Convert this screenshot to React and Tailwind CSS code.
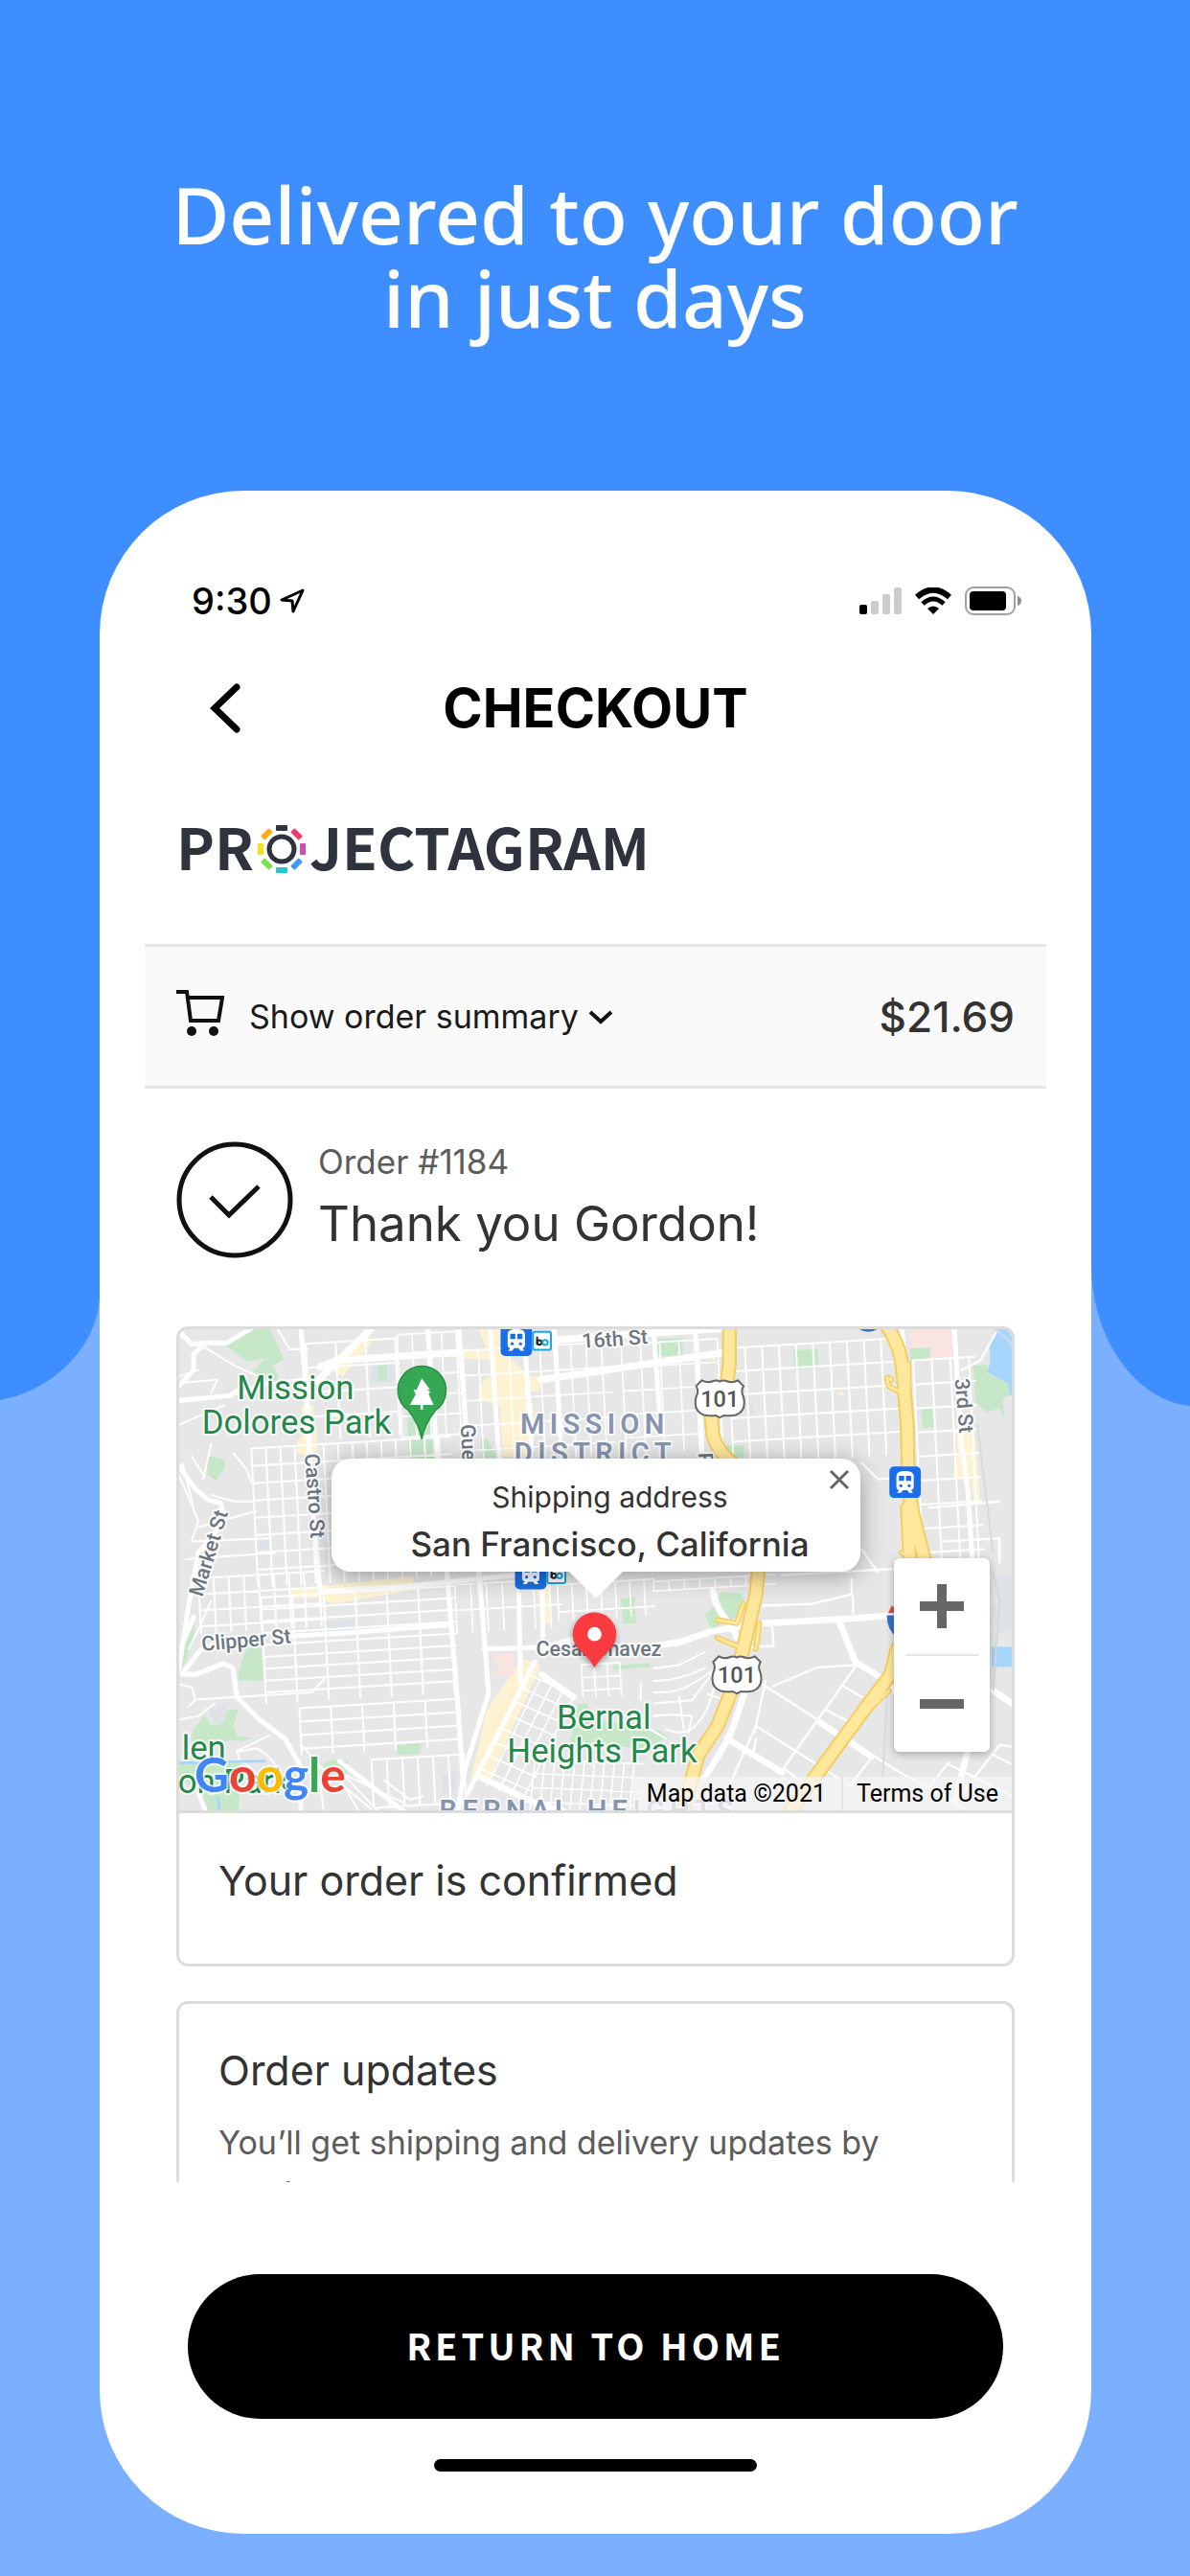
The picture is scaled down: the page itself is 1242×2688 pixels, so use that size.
import React from "react";

const range = (end, step) => {
  const out = [];
  for (let v = 0; v <= end; v += step) out.push(v);
  return out;
};

// A block of city streets: two families of parallel lines leaning by ax and ay.
function Streets({ x, y, w, h, dx, dy, ax = 0.05, ay = -0.06, sw = 6 }) {
  const at = (u, v) => `${x + u + ax * v} ${y + v + ay * u}`;
  const d =
    range(w, dx).map((u) => `M${at(u, 0)}L${at(u, h)}`).join("") +
    range(h, dy).map((v) => `M${at(0, v)}L${at(w, v)}`).join("");
  return <path d={d} strokeWidth={sw} />;
}

function TrainSign({ x, y }) {
  return (
    <g transform={`translate(${x} ${y})`}>
      <rect width="98" height="98" rx="14" fill="#1a6fe8" />
      <path d="M22 30q0-16 27-16t27 16v34q0 8-8 10l6 8h-12l-6-8h-14l-6 8h-12l6-8q-8-2-8-10z" fill="#fff" />
      <path d="M30 29h16v16h-16zM52 29h16v16h-16z" fill="#1a6fe8" />
      <circle cx="36" cy="60" r="5" fill="#1a6fe8" />
      <circle cx="62" cy="60" r="5" fill="#1a6fe8" />
    </g>
  );
}

function BartSign({ x, y }) {
  return (
    <g transform={`translate(${x} ${y})`}>
      <rect x="2" y="2" width="56" height="56" rx="6" fill="#fff" stroke="#1ba5e0" strokeWidth="6" />
      <path d="M15 17v25" stroke="#222" strokeWidth="6" />
      <circle cx="22" cy="35" r="7" fill="none" stroke="#222" strokeWidth="6" />
      <circle cx="40" cy="35" r="8" fill="none" stroke="#1ba5e0" strokeWidth="6" />
    </g>
  );
}

function Shield101({ x, y }) {
  return (
    <g transform={`translate(${x} ${y})`}>
      <path
        d="M22 4Q40 14 58 6Q68 2 78 8Q88 2 98 6Q116 14 134 4L152 22Q142 38 152 56Q162 100 128 112Q104 116 90 114L78 120L66 114Q52 116 28 112Q-6 100 4 56Q14 38 4 22Z"
        fill="#fff" stroke="#666" strokeWidth="6" strokeLinejoin="round"
      />
      <text x="78" y="88" textAnchor="middle" fontSize="70" fontWeight="500" fill="#555">101</text>
    </g>
  );
}

function CityMap() {
  return (
    <svg
      viewBox="0 0 2598 1506"
      preserveAspectRatio="xMidYMid slice"
      className="block h-[502px] w-full font-['Roboto',sans-serif]"
      role="img"
      aria-label="Map of San Francisco"
    >
      <rect width="2598" height="1506" fill="#e7e7e7" />

      <g fill="#c6e8c9">
        <path d="M140 50L220 -5H280L320 80L326 96L290 118L308 140L306 165L226 140L268 92L212 104Z" />
        <path d="M88 398L142 408L140 440L116 474L88 456Z" />
        <path d="M712 262H788L794 420L716 415Z" />
        <path d="M940 340L965 350L990 402L944 404Z" />
        <path d="M1488 32L1572 30L1572 84L1492 88ZM1916 68L1992 64L1996 124L1920 130ZM1708 366H1762V404H1724ZM2280 62L2346 58L2342 92L2282 98ZM2316 252L2350 250L2356 308L2320 312Z" />
        <path d="M2478 116L2520 114L2520 140L2590 172V212L2570 216L2575 280L2560 250L2520 262L2484 228Z" />
        <path d="M208 1000L256 994L264 1100L186 1098L184 1078ZM10 960L40 940L42 905L48 945L20 1040L8 1060Z" />
        <path d="M40 1260L80 1205L100 1240L150 1190L184 1188L170 1240L180 1270L224 1278L200 1290L160 1284L110 1300L40 1290Z" />
        <path d="M0 1355H190L185 1506H90L70 1450L0 1400ZM450 1360L480 1346L530 1350L520 1400H460Z" />
        <path d="M680 1300L755 1295L750 1328L682 1332ZM1379 842L1422 840L1426 920L1384 922ZM1354 1052L1470 1044V1056L1356 1066Z" />
        <path d="M1690 822L1758 826L1760 870L1730 905L1660 938L1640 894L1676 860ZM1245 1172L1270 1170L1300 1220L1500 1255L1530 1278L1440 1310L1220 1290Z" />
      </g>
      <g fill="#fdf3d3">
        <path d="M470 130L590 15L600 45L510 150ZM380 240H420V300L430 320V380L400 395L365 390L370 350L390 330Z" />
        <path d="M935 0H1005L1000 60L1090 150L1125 150V195L1085 200L1105 240L1105 400H1010L1000 240L935 220L940 170L985 140L975 100L850 90L860 60L960 70Z" />
        <path d="M350 812L730 774V816L480 860L430 840L350 844ZM1110 800H1155V885L1165 920H1130L1125 850ZM1070 1030L1130 1050L970 1400L910 1400L935 1300L960 1190Z" />
        <path d="M2420 320L2482 318L2500 546L2480 548L2470 470L2414 470L2430 380ZM1664 90H1672V100H1662ZM2054 200L2074 198V208H2056Z" />
      </g>
      <g fill="#dfe3e8">
        <path d="M600 115L672 100V165L596 175ZM240 662L282 656V712L244 716ZM455 918L545 908V940L458 944ZM92 1190L150 1168L140 1230L110 1240ZM820 1390L865 1380V1450L820 1448ZM1765 232L1792 230V280H1766Z" />
        <path d="M2565 770Q2530 800 2555 850L2530 870L2560 950L2598 940V770Z" />
      </g>
      <path d="M618 118L648 112V165H620Z" fill="#c6e8c9" />
      <path d="M2278 0H2410L2414 94L2344 96V60L2280 62ZM974 1020L1044 1012L1046 1085L992 1088L1002 1046L978 1044ZM1680 802L1710 798L1712 816L1686 824Z" fill="#fae4e2" />
      <path d="M2552 0H2598V210L2592 208L2586 172L2520 136L2530 110L2528 40ZM2535 994H2598V1056H2535Z" fill="#a6d6fb" />

      <g stroke="#fff" fill="none" strokeLinecap="round" strokeLinejoin="round">
        <Streets x={225} y={375} w={620} h={430} dx={45} dy={54} />
        <Streets x={395} y={48} w={280} h={300} dx={93} dy={76} />
        <Streets x={680} y={20} w={200} h={330} dx={46} dy={64} sw={5} />
        <Streets x={885} y={70} w={460} h={350} dx={48} dy={78} sw={5} />
        <Streets x={1379} y={50} w={300} h={340} dx={60} dy={73} sw={5} />
        <Streets x={1712} y={62} w={520} h={360} dx={53} dy={73} />
        <Streets x={2290} y={100} w={190} h={640} dx={58} dy={75} />
        <Streets x={60} y={780} w={390} h={170} dx={47} dy={50} />
        <Streets x={255} y={840} w={600} h={330} dx={98} dy={37} />
        <Streets x={375} y={1185} w={500} h={145} dx={98} dy={42} />
        <Streets x={600} y={1346} w={290} h={150} dx={48} dy={150} />
        <Streets x={860} y={800} w={330} h={150} dx={49} dy={80} sw={5} />
        <Streets x={1180} y={800} w={300} h={110} dx={45} dy={85} sw={5} />
        <Streets x={1480} y={790} w={380} h={30} dx={48} dy={30} sw={5} />
        <Streets x={1090} y={1080} w={150} h={330} dx={36} dy={42} ax={-0.5} ay={0.45} sw={5} />
        <Streets x={1110} y={1345} w={340} h={160} dx={31} dy={44} ay={0.04} ax={-0.1} sw={5} />
        <Streets x={1255} y={1050} w={120} h={100} dx={40} dy={40} sw={5} />
        <path
          strokeWidth="6"
          d="M0 230L180 205L260 175L400 155M0 300L140 240M80 60L180 120L250 150M0 150L60 130M300 -10L345 65H400M0 170L120 160L100 200M170 390L210 440L225 480M100 360L75 470M40 400L80 465M0 460L60 600L40 660M100 520L170 540L230 540M60 620L240 570M40 665L280 655M20 720L300 700M10 420L45 560M100 850L60 940L30 1000M0 1110L40 1120L50 1160L30 1180M50 1158L180 1150L410 1136M460 1085L415 1136M0 1220L60 1210L110 1170M180 1318L220 1300L280 1270M185 1320L240 1310Q290 1330 320 1400M180 1320L190 1350Q240 1370 260 1430M380 1300L410 1330M430 1360L600 1500M470 1370L700 1480M500 1400L560 1506M520 1400L620 1506M440 1420L450 1500M640 1410L720 1470L760 1460"
        />
        <path
          strokeWidth="6"
          d="M1480 1060Q1500 1060 1560 1050L1640 1010M1480 1100Q1560 1100 1640 1060M1480 1135Q1550 1140 1600 1110L1680 1060M1480 1170L1600 1160L1630 1120L1690 1040M1480 1210Q1540 1200 1600 1210L1590 1260M1520 1250Q1600 1290 1650 1180L1670 1120M1700 1160L1650 1140M1560 1150L1575 1250M1440 1110V1160M1450 1240L1520 1280"
        />
        <path
          strokeWidth="7"
          d="M1820 865L1970 860L2098 830V780M2102 835L2103 890M1850 930L1855 990L1780 995M1855 1115L1990 1058L2110 1050M1820 1110L2240 1380M1800 1240L2100 1430M1800 1240L1750 1350L1720 1420M1800 1280L1790 1330M2110 1055L1880 1380M2070 1115L2130 1150M2020 1190L2045 1205L2120 1240M1890 1375L1990 1450M1830 1100L1795 1260M2160 1340L2090 1430M2240 1380L2400 1470M2400 1360L2600 1460M2400 1355L2340 1430L2450 1500M2560 1300L2420 1480M2540 1330L2598 1360M2598 1305L2560 1300"
        />
        <path strokeWidth="7" d="M2130 420L2180 470L2300 462M2340 560L2560 540M2380 665L2560 655V730M2440 130L2500 100L2550 10M2130 690L2180 760M1880 770L2230 750" />
        <path
          strokeWidth="15"
          d="M0 10L40 50L85 45L150 45L225 0M85 45L45 80V130L0 180M0 225L160 210L180 195M0 430L50 500L90 535L130 545L140 590L110 640L60 700L30 860L0 1060M10 1075L70 1000L100 990M10 1078L50 1080L140 1045L168 1060L180 1150L250 1220L330 1280L375 1360L380 1500M0 1010L45 900M60 1450L80 1500M500 1350L700 1506"
        />
        <path strokeWidth="15" d="M380 0L392 150L400 300L420 600L440 820L700 805L1040 770M775 -10L800 330L830 700L870 1180L885 1400M872 -10L900 380L930 700L955 1000L965 1140L890 1380L870 1506M970 -10L995 360L1010 480M1075 -10L1100 380M1170 -10L1190 340M350 960L520 950L840 925M950 1000L1130 995M1110 1040L900 1450M1060 830L1065 1100L1075 1120M1132 780L1135 960" />
        <path strokeWidth="22" d="M610 -10L430 165M440 120L490 100L870 75M1130 40L1320 25L1700 0M1130 160L1299 135L1700 75" />
        <path strokeWidth="15" d="M1480 0L1500 280M1610 -10L1630 390M2418 -10L2440 350L2460 500L2475 720M2255 0L2275 230M2290 740L2330 740" />
        <path strokeWidth="20" d="M1665 820Q1675 880 1725 930L1740 965M1480 990L1560 980L1660 945L1820 920L2100 905L2230 895M2060 915L2110 1040L2190 1090L2260 1160M1770 1120L1730 1240L1710 1285L1660 1370L1640 1400M1710 1280L1880 1385M2000 1230L2160 1335M2540 1130L2598 1170M2460 1320L2420 1480M940 1400L1110 1480L1200 1506M1130 1080L1230 1150M1130 1000L1270 960L1340 975" />
      </g>

      <path d="M270 1350L0 1356M120 1460L126 1506" stroke="#a6d6fb" strokeWidth="8" fill="none" />
      <path d="M2540 0Q2600 40 2598 60M2490 300L2540 700M2210 1120L2190 1500M2540 760L2560 850L2540 1130" stroke="#d6dae0" strokeWidth="6" fill="none" />

      <g fill="none" strokeLinecap="round" strokeLinejoin="round">
        <g stroke="#f3cd62" strokeWidth="46">
          <path d="M1717 -20V110L1705 200L1660 270L1665 330Q1680 390 1740 430Q1800 500 1810 720L1800 830L1760 1000L1720 1140L1680 1240L1620 1330L1590 1440L1570 1520" />
          <path d="M2200 -20Q2250 50 2256 120L2272 300L2275 500L2290 580L2330 740M2272 560L2280 720M2240 1000L2220 1080L2130 1200L2020 1350L1940 1460L1890 1530" />
        </g>
        <path d="M2222 160Q2200 140 2215 180L2250 200M2276 110V250M2255 700L2290 720M1680 910L1740 920L1760 860M1680 965L1760 1000M1810 920L1800 1000M2215 1130L2110 1230" stroke="#f3cd62" strokeWidth="18" />
        <path d="M2222 160Q2200 140 2215 180L2250 200M2276 110V250M2255 700L2290 720M1680 910L1740 920L1760 860M1680 965L1760 1000M1810 920L1800 1000M2215 1130L2110 1230" stroke="#ffe79c" strokeWidth="9" />
        <g stroke="#ffe79c" strokeWidth="34">
          <path d="M1717 -20V110L1705 200L1660 270L1665 330Q1680 390 1740 430Q1800 500 1810 720L1800 830L1760 1000L1720 1140L1680 1240L1620 1330L1590 1440L1570 1520" />
          <path d="M2200 -20Q2250 50 2256 120L2272 300L2275 500L2290 580L2330 740M2272 560L2280 720M2240 1000L2220 1080L2130 1200L2020 1350L1940 1460L1890 1530" />
        </g>
      </g>

      <TrainSign x={1003} y={-12} />
      <BartSign x={1102} y={9} />
      <TrainSign x={1048} y={716} />
      <BartSign x={1147} y={737} />
      <TrainSign x={2216} y={431} />
      <path d="M2108 -8H2192Q2150 30 2108 -8Z" fill="#3474c9" />
      <path d="M2208 895H2240V965Q2208 940 2208 895Z" fill="#3474c9" />
      <path d="M2212 888L2224 864L2240 880V888Z" fill="#cf5155" />

      <g stroke="#fff" strokeWidth="12" strokeLinejoin="round" style={{ paintOrder: "stroke" }} strokeOpacity="0.8">
        <g fill="#23884a" fontSize="104">
          <text x="363" y="222" textAnchor="middle">Mission</text>
          <text x="366" y="327" textAnchor="middle">Dolores Park</text>
          <text x="1325" y="1248" textAnchor="middle">Bernal</text>
          <text x="1320" y="1353" textAnchor="middle">Heights Park</text>
          <text x="8" y="1344">len</text>
          <text x="-4" y="1450">on Park</text>
        </g>
        <g fill="#8694b0" fontSize="87" fontWeight="600">
          <text x="1064" y="329" letterSpacing="16">MISSION</text>
          <text x="1046" y="419" letterSpacing="16">DISTRICT</text>
          <text x="812" y="1532" letterSpacing="16">BERNAL HEIGHTS</text>
        </g>
        <g fill="#6c7680" fontSize="64" fontWeight="500">
          <text x="1258" y="62" transform="rotate(-4 1258 62)">16th St</text>
          <text transform="translate(878 300) rotate(87)">Gue</text>
          <text transform="translate(392 392) rotate(86)">Castro St</text>
          <text transform="translate(72 840) rotate(-73)">Market St</text>
          <text transform="translate(72 1006) rotate(-5)">Clipper St</text>
          <text transform="translate(2420 158) rotate(85)">3rd St</text>
          <text transform="translate(1620 388) rotate(88)">Po</text>
          <text x="1114" y="1022">Cesar Chavez</text>
        </g>
      </g>

      <Shield101 x={1609} y={158} />
      <Shield101 x={1662} y={1019} />

      <path d="M757 345Q750 300 715 255A75 75 0 1 1 800 255Q764 300 757 345Z" fill="#34a853" stroke="#2b9247" strokeWidth="5" />
      <path d="M757 156L783 192H773L783 198L779 206L794 239H761V253H753V239H720L738 206L731 192H741Z" fill="#fff" />

      <path d="M1296 1062Q1280 1036 1256 1018A68 68 0 1 1 1338 1016Q1310 1040 1296 1062Z" fill="#000" opacity="0.4" className="blur-[10px]" />
      <path d="M1296 1059Q1284 1034 1250 1004A68 68 0 1 1 1344 1002Q1310 1034 1296 1059Z" fill="#fa3c41" />
      <circle cx="1296" cy="954" r="22" fill="#fff" />

      <text
        x="48" y="1448" fontSize="148" fontWeight="700"
        className="font-['Lato',sans-serif]"
        stroke="#fff" strokeWidth="12" strokeOpacity="0.7" strokeLinejoin="round" style={{ paintOrder: "stroke" }}
      >
        <tspan fill="#4285f4">G</tspan>
        <tspan fill="#ea4335">o</tspan>
        <tspan fill="#fbbc05">o</tspan>
        <tspan fill="#4285f4">g</tspan>
        <tspan fill="#34a853">l</tspan>
        <tspan fill="#ea4335">e</tspan>
      </text>
    </svg>
  );
}

const logoTicks = ["#2e333d", "#ef3b6c", "#c94fb8", "#4596f0", "#26c6c6", "#7de04f", "#f7e01e", "#ffab1a"];

function Logo() {
  return (
    <div
      className="flex items-center text-[60px] font-bold leading-[52px] text-[#2e333d] font-['Noto_Sans_CJK_JP',sans-serif]"
      aria-label="Projectagram"
    >
      <span className="pb-2">PR</span>
      <svg viewBox="-27 -27 54 54" className="mx-0.5 size-[54px]" aria-hidden="true">
        <circle r="13" fill="none" stroke="#2e333d" strokeWidth="5" />
        {logoTicks.map((color, i) => (
          <rect key={color} x="-6" y="-25" width="12" height="6" rx="1" fill={color} transform={`rotate(${i * 45})`} />
        ))}
      </svg>
      <span className="pb-2">JECTAGRAM</span>
    </div>
  );
}

function StatusBar() {
  return (
    <div className="flex h-12 items-center justify-between pl-24 pr-[72px]">
      <div className="flex items-center gap-2">
        <span className="text-[38px] font-medium leading-none text-black">9:30</span>
        <svg viewBox="0 0 26 26" className="size-[26px]" aria-hidden="true">
          <path d="M2 12L24 2L14 24L13 13Z" fill="none" stroke="#000" strokeWidth="3" strokeLinejoin="round" />
        </svg>
      </div>
      <div className="flex items-center gap-3.5">
        <svg viewBox="0 0 44 28" className="h-7 w-11" aria-label="Signal">
          <rect x="0" y="18" width="8" height="10" rx="2" fill="#000" />
          <rect x="12" y="14" width="8" height="14" rx="2" fill="#ccc" />
          <rect x="24" y="7" width="8" height="21" rx="2" fill="#ccc" />
          <rect x="36" y="0" width="8" height="28" rx="2" fill="#ccc" />
        </svg>
        <svg viewBox="0 0 38 28" className="h-7 w-[38px]" aria-label="Wi-Fi">
          <path d="M2 10Q19 -5 36 10" fill="none" stroke="#000" strokeWidth="6" />
          <path d="M8 17Q19 7 30 17" fill="none" stroke="#000" strokeWidth="5" />
          <path d="M13 22Q19 17 25 22L19 28Z" fill="#000" />
        </svg>
        <svg viewBox="0 0 60 30" className="h-[30px] w-[60px]" aria-label="Battery">
          <rect x="1" y="1" width="51" height="28" rx="8" fill="none" stroke="#a0a0a0" strokeWidth="2" />
          <rect x="5" y="5" width="38" height="20" rx="4" fill="#000" />
          <path d="M55 10q4 1 4 5t-4 5z" fill="#8f8f8f" />
        </svg>
      </div>
    </div>
  );
}

function AddressPopup() {
  return (
    <div className="absolute left-1/2 top-[135px] w-[552px] -translate-x-1/2 rounded-[20px] bg-white pl-[30px] pt-5 text-center text-[#333] shadow-[0_4px_24px_rgba(0,0,0,0.35)]">
      <p className="text-[30px] leading-10">Shipping address</p>
      <p className="whitespace-nowrap text-[35px] font-medium leading-[58px]">San Francisco, California</p>
      <button type="button" aria-label="Close" className="absolute right-3 top-3">
        <svg viewBox="0 0 20 20" className="size-5">
          <path d="M1 1L19 19M19 1L1 19" stroke="#666" strokeWidth="3" />
        </svg>
      </button>
      <svg viewBox="0 0 56 28" className="absolute left-1/2 top-full h-7 w-14 -translate-x-1/2" aria-hidden="true">
        <path d="M0 0H56L28 28Z" fill="#fff" />
      </svg>
    </div>
  );
}

function ZoomControl() {
  return (
    <div className="absolute bottom-[61px] right-[23px] flex w-[100px] flex-col items-center rounded-md bg-white shadow-[0_2px_8px_rgba(0,0,0,0.3)]">
      <button type="button" aria-label="Zoom in" className="flex h-[100px] w-full items-center justify-center">
        <svg viewBox="0 0 46 46" className="size-[46px]">
          <path d="M18 0h10v18h18v10H28v18H18V28H0V18h18z" fill="#666" />
        </svg>
      </button>
      <div className="h-0.5 w-[76px] bg-[#e6e6e6]" />
      <button type="button" aria-label="Zoom out" className="flex h-[100px] w-full items-center justify-center">
        <svg viewBox="0 0 46 10" className="h-2.5 w-[46px]">
          <path d="M0 0h46v10H0z" fill="#666" />
        </svg>
      </button>
    </div>
  );
}

export default function App() {
  return (
    <main className="relative isolate min-h-screen overflow-hidden bg-[#7bafff] pb-11 pt-[180px] font-['Inter',sans-serif]">
      <svg
        viewBox="0 0 1242 1468"
        preserveAspectRatio="none"
        className="absolute inset-x-0 top-0 -z-10 h-[1468px] w-full"
        aria-hidden="true"
      >
        <path d="M0 0H1242V1467C1180 1460 1139 1390 1139 1320L104 1350C104 1400 60 1450 0 1461Z" fill="#3f8eff" />
      </svg>

      <h1 className="text-center text-[82px] font-medium leading-[87px] text-white font-['Noto_Sans',sans-serif]">
        Delivered to your door
        <br />
        in just days
      </h1>

      <section className="ml-[104px] mr-[103px] mt-[158px] rounded-[150px] bg-white pb-[65px] pt-[91px]">
        <StatusBar />

        <header className="mt-[58px] grid h-[60px] grid-cols-[1fr_auto_1fr] items-center px-[115px]">
          <button type="button" aria-label="Back" className="justify-self-start">
            <svg viewBox="0 0 32 52" className="h-[52px] w-8">
              <path d="M28 4L5 26L28 48" fill="none" stroke="#000" strokeWidth="7" strokeLinecap="round" />
            </svg>
          </button>
          <h2 className="text-[56px] font-bold leading-[60px] text-black">CHECKOUT</h2>
        </header>

        <div className="px-[47px]">
          <div className="mt-[87px] px-[33px]">
            <Logo />
          </div>

          <div className="mt-[69px] flex h-[151px] items-center justify-between border-y-[3px] border-[#e6e6e6] bg-[#fafafa] px-[33px]">
            <button type="button" className="flex items-center text-[34px] leading-[48px] text-[#1a1a1a]">
              <span className="mr-[26px] pb-2">
                <svg viewBox="0 0 50 48" className="h-12 w-[50px]" aria-hidden="true">
                  <path d="M0 2H11L15 32H44L48 8H13" fill="none" stroke="#111" strokeWidth="4" />
                  <circle cx="16" cy="43" r="5" fill="#111" />
                  <circle cx="39" cy="43" r="5" fill="#111" />
                </svg>
              </span>
              Show order summary
              <svg viewBox="0 0 26 16" className="ml-2.5 h-4 w-[26px]" aria-hidden="true">
                <path d="M2 3L13 13L24 3" fill="none" stroke="#111" strokeWidth="4" />
              </svg>
            </button>
            <span className="text-[44px] font-medium leading-[48px] text-[#333]">$21.69</span>
          </div>

          <div className="px-[33px]">
            <div className="mt-[55px] flex h-[122px] items-center gap-[26px]">
              <svg viewBox="0 0 122 122" className="size-[122px]" aria-hidden="true">
                <circle cx="61" cy="61" r="58" fill="none" stroke="#111" strokeWidth="5" />
                <path d="M36 58L55 77L86 47" fill="none" stroke="#111" strokeWidth="5" />
              </svg>
              <div className="pb-1">
                <p className="text-[35px] leading-[54px] text-[#5c5c5c]">Order #1184</p>
                <h3 className="text-[51px] leading-[76px] text-[#333]">Thank you Gordon!</h3>
              </div>
            </div>

            <article className="mt-[71px] overflow-hidden rounded-xl border-[3px] border-[#dcdcdc]">
              <div className="relative overflow-hidden border-b-[3px] border-[#dcdcdc]">
                <CityMap />
                <div className="absolute bottom-0 right-0 flex bg-[#f5f5f5]/75 text-[25px] leading-[35px] text-black font-['Roboto',sans-serif]">
                  <span className="pl-3.5 pr-4">Map data ©2021</span>
                  <a href="#terms" className="border-l-2 border-[#e4e4e4] px-3.5">Terms of Use</a>
                </div>
                <ZoomControl />
                <AddressPopup />
              </div>
              <h4 className="px-[41px] pb-[60px] pt-[43px] text-[43px] leading-[54px] text-[#333]">Your order is confirmed</h4>
            </article>

            <div className="mt-9 h-[189px] overflow-hidden">
              <article className="rounded-xl border-[3px] border-[#dcdcdc] px-[41px] pb-10 pt-[42px]">
                <h4 className="text-[43px] leading-[54px] text-[#333]">Order updates</h4>
                <p className="mt-[22px] text-[34px] leading-[54px] text-[#5c5c5c]">You’ll get shipping and delivery updates by email.</p>
              </article>
            </div>
          </div>
        </div>

        <div className="mt-24 px-[92px]">
          <button
            type="button"
            className="flex h-[151px] w-full items-center justify-center rounded-full bg-black pb-1 text-[38px] font-bold tracking-[4px] text-white font-['Noto_Sans_CJK_JP',sans-serif]"
          >
            RETURN TO HOME
          </button>
        </div>
        <div className="mx-auto mt-[42px] h-[13px] w-[337px] rounded-full bg-black" />
      </section>
    </main>
  );
}
